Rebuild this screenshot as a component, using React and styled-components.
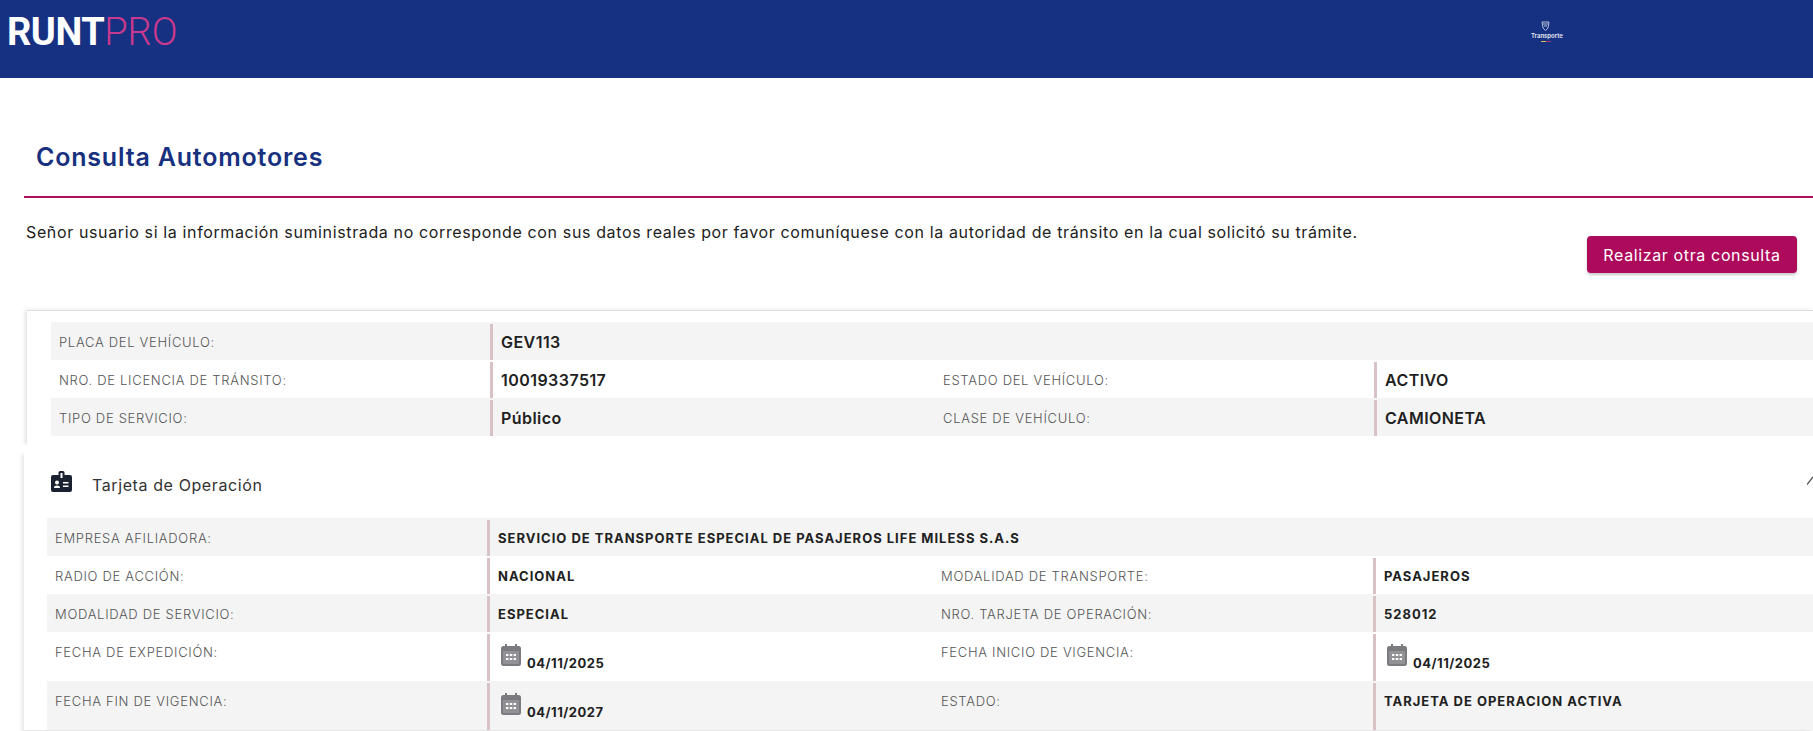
import React from "react";
import styled, { createGlobalStyle } from "styled-components";

const GlobalStyle = createGlobalStyle`
  html, body {
    margin: 0;
    padding: 0;
    background: #fff;
    overflow: hidden;
  }
  body {
    font-family: Inter, "Noto Sans", "Liberation Sans", sans-serif;
    color: #212121;
  }
`;

const Page = styled.div`
  width: 1813px;
  height: 731px;
  overflow: hidden;
`;

const Header = styled.header`
  height: 78px;
  background: #163182;
  display: flex;
  justify-content: space-between;
  padding-left: 7px;
`;

const Logo = styled.div`
  font-family: Roboto, "Liberation Sans", sans-serif;
  font-size: 38px;
  line-height: 44px;
  margin-top: 10px;
  font-weight: 700;
  color: #fff;
  letter-spacing: -0.5px;
`;

const LogoPro = styled.span`
  font-weight: 300;
  color: #c93a8e;
  letter-spacing: 0;
`;

const Ministry = styled.div`
  width: 282px;
  padding-top: 21px;
  display: flex;
  flex-direction: column;
  align-items: flex-start;
`;

const MinistryText = styled.span`
  font-size: 6px;
  line-height: 8px;
  font-weight: 600;
  color: #e8ebf5;
`;

const MinistryIcon = styled.svg`
  margin-left: 10px;
  width: 9px;
  height: 10px;
  margin-bottom: 1px;
`;

const MinistryFlag = styled.div`
  margin: 1px 0 0 10px;
  width: 10px;
  height: 1px;
  background: linear-gradient(90deg, #d9c34a 50%, #a8307a 50%);
`;

const TitleBlock = styled.div`
  height: 120px;
  margin-left: 24px;
  padding: 39px 0 0 12px;
  border-bottom: 2px solid #a80f5c;
  box-sizing: border-box;
  display: flex;
  align-items: center;
`;

const Title = styled.h1`
  margin: 0;
  font-size: 25px;
  line-height: 32px;
  font-weight: 600;
  color: #17317f;
  letter-spacing: 0.8px;
`;

const Intro = styled.div`
  height: 112px;
  box-sizing: border-box;
  padding: 0 16px 0 26px;
  display: flex;
  justify-content: space-between;
  align-items: flex-start;
`;

const IntroText = styled.p`
  margin: 22px 0 0;
  font-size: 16px;
  line-height: 24px;
  color: #212121;
  letter-spacing: 0.63px;
`;

const Button = styled.button`
  margin-top: 38px;
  width: 210px;
  height: 37px;
  border: none;
  border-radius: 4px;
  background: #ad0a5c;
  color: #fff;
  font-family: inherit;
  font-size: 16px;
  letter-spacing: 0.63px;
  box-shadow: 0 2px 3px rgba(0, 0, 0, 0.22);
`;

const Card = styled.section`
  margin-left: 27px;
  border-top: 1px solid #dedede;
  padding: 11px 0 9px 24px;
  box-shadow: -2px 0 4px rgba(0, 0, 0, 0.12);
`;

const OperationCard = styled.section`
  position: relative;
  margin-left: 24px;
  padding-left: 23px;
  background: #fff;
  box-shadow: -2px 9px 4px rgba(0, 0, 0, 0.1);
`;

const PanelHeader = styled.div`
  height: 73px;
  box-sizing: border-box;
  padding: 26px 0 0 4px;
  display: flex;
  align-items: flex-start;
  position: relative;
`;

const BadgeIcon = styled.svg`
  width: 21px;
  height: 21px;
  flex: none;
`;

const PanelTitle = styled.span`
  margin: 4px 0 0 20px;
  font-size: 16px;
  line-height: 20px;
  color: #333;
  letter-spacing: 0.6px;
`;

const Chevron = styled.svg`
  position: absolute;
  top: 31px;
  right: 0;
  width: 6px;
  height: 9px;
`;

const Row = styled.div`
  display: grid;
  grid-template-columns: ${(p) => p.$cols};
  background: ${(p) => (p.$shaded ? "#f4f4f4" : "#fff")};
`;

const Label = styled.div`
  padding: 12px 0 10px 8px;
  font-size: 13px;
  line-height: 16px;
  font-weight: 300;
  color: #555;
  letter-spacing: 0.7px;
`;

const Value = styled.div`
  margin-top: 2px;
  border-left: 3px solid #d9c2c6;
  padding-left: 8px;
  color: #212121;
  font-weight: ${(p) => (p.$large ? 600 : 700)};
  font-size: ${(p) => (p.$large ? "16px" : "13px")};
  letter-spacing: ${(p) => (p.$large ? "0.45px" : "1px")};
  line-height: 36px;
  white-space: nowrap;
`;

const DateValue = styled.div`
  display: flex;
  align-items: flex-start;
  gap: 6px;
  padding: 10px 0 0 3px;
  height: 47px;
  box-sizing: border-box;
  line-height: 16px;
`;

const DateText = styled.span`
  margin-top: 11px;
  letter-spacing: 0.5px;
`;

const CalendarIcon = styled.svg`
  width: 20px;
  height: 22px;
  flex: none;
`;

const Calendar = () => (
  <CalendarIcon viewBox="0 0 20 22">
    <path
      fill="#7b7b7f"
      d="M4 0h2v2h8V0h2v2h1.5A2.5 2.5 0 0 1 20 4.5v15a2.5 2.5 0 0 1-2.5 2.5h-15A2.5 2.5 0 0 1 0 19.5v-15A2.5 2.5 0 0 1 2.5 2H4z"
    />
    <path fill="#fff" d="M2 7h16v12.5a.6.6 0 0 1-.6.6H2.6a.6.6 0 0 1-.6-.6z" opacity="0.18" />
    <path fill="#fff" d="M5 10h2.4v2H5zm3.8 0h2.4v2H8.800zm3.800 0H15v2h-2.400zM5 14h2.400v2H5zm3.800 0h2.400v2H8.800zm3.800 0H15v2h-2.400z" />
  </CalendarIcon>
);

const DateCell = ({ children }) => (
  <DateValue>
    <Calendar />
    <DateText>{children}</DateText>
  </DateValue>
);

const vehicleRows = [
  [["PLACA DEL VEHÍCULO:", "GEV113"]],
  [
    ["NRO. DE LICENCIA DE TRÁNSITO:", "10019337517"],
    ["ESTADO DEL VEHÍCULO:", "ACTIVO"],
  ],
  [
    ["TIPO DE SERVICIO:", "Público"],
    ["CLASE DE VEHÍCULO:", "CAMIONETA"],
  ],
];

const operationRows = [
  [["EMPRESA AFILIADORA:", "SERVICIO DE TRANSPORTE ESPECIAL DE PASAJEROS LIFE MILESS S.A.S"]],
  [
    ["RADIO DE ACCIÓN:", "NACIONAL"],
    ["MODALIDAD DE TRANSPORTE:", "PASAJEROS"],
  ],
  [
    ["MODALIDAD DE SERVICIO:", "ESPECIAL"],
    ["NRO. TARJETA DE OPERACIÓN:", "528012"],
  ],
  [
    ["FECHA DE EXPEDICIÓN:", <DateCell>04/11/2025</DateCell>],
    ["FECHA INICIO DE VIGENCIA:", <DateCell>04/11/2025</DateCell>],
  ],
  [
    ["FECHA FIN DE VIGENCIA:", <DateCell>04/11/2027</DateCell>],
    ["ESTADO:", "TARJETA DE OPERACION ACTIVA"],
  ],
];

const DataRows = ({ rows, cols, large }) =>
  rows.map((cells, i) => (
    <Row key={i} $shaded={i % 2 === 0} $cols={cols}>
      {cells.map(([label, value]) => (
        <React.Fragment key={label}>
          <Label>{label}</Label>
          <Value $large={large}>{value}</Value>
        </React.Fragment>
      ))}
    </Row>
  ));

export default function App() {
  return (
    <Page>
      <GlobalStyle />
      <Header>
        <Logo>
          RUNT<LogoPro>PRO</LogoPro>
        </Logo>
        <Ministry>
          <MinistryIcon viewBox="0 0 9 10">
            <path
              fill="none"
              stroke="#dfe4f2"
              strokeWidth="0.8"
              d="M1 1h7L7 7 4.500 9.500 2 7zM2 3h5M3 5h3"
            />
          </MinistryIcon>
          <MinistryText>Transporte</MinistryText>
          <MinistryFlag />
        </Ministry>
      </Header>

      <TitleBlock>
        <Title>Consulta Automotores</Title>
      </TitleBlock>

      <Intro>
        <IntroText>
          Señor usuario si la información suministrada no corresponde con sus datos reales por
          favor comuníquese con la autoridad de tránsito en la cual solicitó su trámite.
        </IntroText>
        <Button>Realizar otra consulta</Button>
      </Intro>

      <Card>
        <DataRows rows={vehicleRows} cols="439px 445px 439px 1fr" large />
      </Card>

      <OperationCard>
        <PanelHeader>
          <BadgeIcon viewBox="0 0 21 21">
            <path
              fill="#1a2130"
              fillRule="evenodd"
              d="M7.500 4V1.500A1.500 1.500 0 0 1 9 0h3a1.500 1.500 0 0 1 1.500 1.500V4H19a2 2 0 0 1 2 2v13a2 2 0 0 1-2 2H2a2 2 0 0 1-2-2V6a2 2 0 0 1 2-2zM9.500 2v5h2V2z"
            />
            <circle cx="6" cy="11.500" r="2" fill="#fff" />
            <path fill="#fff" d="M3 17c0-2 1.300-2.600 3-2.600S9 15 9 17zM12 11h5.500v1.500H12zM12 14.500h5.500V16H12z" />
          </BadgeIcon>
          <PanelTitle>Tarjeta de Operación</PanelTitle>
          <Chevron viewBox="0 0 6 9">
            <path fill="none" stroke="#555" strokeWidth="1.300" d="M0 8.500L6 1" />
          </Chevron>
        </PanelHeader>
        <DataRows rows={operationRows} cols="440px 446px 440px 1fr" />
      </OperationCard>
    </Page>
  );
}
